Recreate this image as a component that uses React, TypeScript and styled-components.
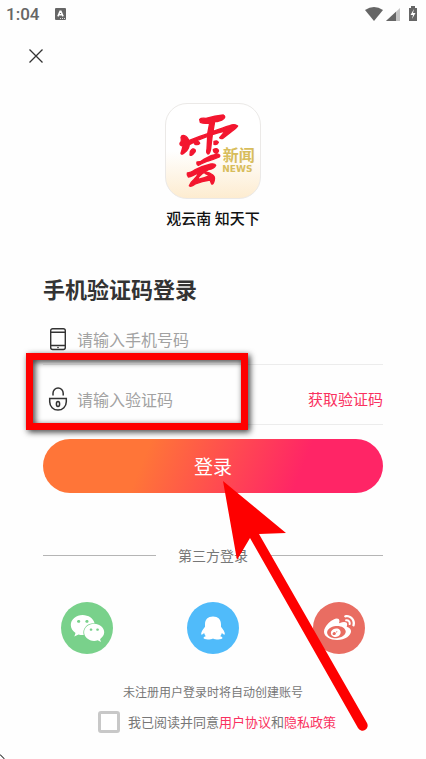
import React, { useState } from 'react';
import styled, { createGlobalStyle } from 'styled-components';
import { FaWeixin, FaWeibo } from 'react-icons/fa';

const GlobalStyle = createGlobalStyle`
  * { box-sizing: border-box; }
  body {
    margin: 0;
    background: #fefefe;
    color: #333;
    font-family: "Noto Sans CJK SC", "Noto Sans", sans-serif;
  }
  button, input { font-family: inherit; }
`;

const Page = styled.div`
  position: relative;
  display: flex;
  flex-direction: column;
  min-height: 100vh;
  overflow: hidden;
`;

const StatusBar = styled.header`
  display: flex;
  align-items: center;
  justify-content: space-between;
  height: 28px;
  padding: 0 7px 0 6px;
  color: #666;
`;

const StatusGroup = styled.div<{ $gap: number }>`
  display: flex;
  align-items: center;
  gap: ${(p) => p.$gap}px;
  svg { display: block; }
`;

const Time = styled.time`
  font: 500 17px/28px Roboto, sans-serif;
`;

const CloseButton = styled.button`
  display: flex;
  align-self: flex-start;
  margin: 20px 0 0 28px;
  padding: 0;
  border: 0;
  background: none;
  color: #333;
  cursor: pointer;
`;

const Brand = styled.section`
  display: flex;
  flex-direction: column;
  align-items: center;
  margin-top: 39px;
`;

const LogoTile = styled.div`
  width: 96px;
  height: 96px;
  border: 1px solid #ebe9e7;
  border-radius: 22px;
  background: linear-gradient(#fff 50%, #fdecd0);
  svg { display: block; width: 94px; height: 94px; }
`;

const Slogan = styled.p`
  margin: 7px 0 0;
  color: #111;
  font-size: 15px;
  font-weight: 500;
  line-height: 24px;
`;

const Form = styled.form`
  margin: 0 43px;
`;

const Title = styled.h1`
  margin: 42px 0 1px;
  font-size: 22px;
  font-weight: 700;
  line-height: 32px;
`;

const Field = styled.div`
  position: relative;
  display: flex;
  align-items: center;
  height: 60px;
  padding: 9px 0 0 5px;
  border-bottom: 1px solid #ececec;
  color: #333;
  svg { flex: none; }
`;

const FieldLabel = styled.label`
  display: flex;
  flex: none;
  width: 29px;
`;

const TextInput = styled.input`
  flex: 1;
  min-width: 0;
  padding: 0;
  border: 0;
  outline: 0;
  background: none;
  color: #333;
  font-size: 16px;
  line-height: 24px;
  &::placeholder { color: #a2a2a2; opacity: 1; }
`;

const CodeButton = styled.button`
  flex: none;
  padding: 0;
  border: 0;
  background: none;
  color: #fa3160;
  font-size: 15px;
  line-height: 24px;
  cursor: pointer;
`;

const HighlightFrame = styled.div`
  position: absolute;
  z-index: 2;
  top: -12px;
  left: -17px;
  width: 222px;
  height: 77px;
  border: 7px solid #fe0000;
  filter: drop-shadow(2px 2px 3px rgba(0, 0, 0, 0.8));
  pointer-events: none;
`;

const SubmitArea = styled.div`
  position: relative;
  margin-top: 14px;
`;

const SubmitButton = styled.button`
  display: block;
  width: 100%;
  height: 54px;
  padding: 0;
  border: 0;
  border-radius: 27px;
  background: linear-gradient(112deg, #ff7538 30%, #ff2566 75%);
  color: #fff;
  font-size: 19px;
  line-height: 54px;
  cursor: pointer;
`;

const PointerArrow = styled.svg`
  position: absolute;
  z-index: 3;
  top: 42px;
  left: 50%;
  width: 160px;
  height: 252px;
  pointer-events: none;
`;

const Separator = styled.div`
  display: flex;
  align-items: center;
  gap: 22px;
  margin: 50px 43px 0;
  color: #777;
  font-size: 14px;
  line-height: 24px;
  &::before, &::after {
    content: "";
    flex: 1;
    height: 1px;
    background: #b5b5b5;
  }
`;

const Providers = styled.div`
  display: flex;
  justify-content: space-between;
  margin: 35px 61px 0;
`;

const ProviderButton = styled.button<{ $color: string }>`
  display: flex;
  align-items: center;
  justify-content: center;
  width: 52px;
  height: 52px;
  padding: 0;
  border: 0;
  border-radius: 50%;
  background: ${(p) => p.$color};
  color: #fff;
  cursor: pointer;
`;

const Notice = styled.p`
  margin: 28px 0 0;
  color: #777;
  font-size: 12px;
  line-height: 20px;
  text-align: center;
`;

const Agreement = styled.div`
  display: flex;
  align-items: center;
  justify-content: center;
  gap: 8px;
  margin-top: 9px;
  padding: 0 8px 0 16px;
  color: #777;
  font-size: 13px;
  line-height: 22px;
`;

const CheckBox = styled.input`
  appearance: none;
  flex: none;
  width: 22px;
  height: 22px;
  margin: 0;
  border: 3px solid #c8c8c8;
  border-radius: 3px;
  background: #fff;
  &:checked { background: #fa3160; }
`;

const PolicyLink = styled.a`
  color: #fa3160;
  text-decoration: none;
`;

const CornerMark = styled.svg`
  position: absolute;
  bottom: 0;
  left: 0;
`;

const CloudLogo = () => (
  <svg viewBox="48 42 282 282" role="img" aria-label="云新闻">
    <g fill="#f3162f" stroke="#f3162f" strokeWidth="4" strokeLinejoin="round">
      <path d="M149 88Q153 83 168 85Q195 77 220 75Q228 80 221 86Q210 95 194 95L189 124Q220 113 239 107Q254 100 263 108Q259 115 244 125L219 145Q211 147 209 143L226 123Q207 126 187 134L182 176Q180 191 174 192Q168 190 171 177L173 139Q143 149 118 164Q116 179 105 187Q96 196 93 190Q97 178 99 168Q88 166 90 159Q96 155 93 142Q95 135 103 137Q113 140 116 152Q145 140 173 131L179 99Q161 102 151 97Z" />
      <path d="M134 153Q146 152 149 160Q145 166 135 163Q129 157 134 153Z" />
      <path d="M121 184Q128 172 135 179Q138 184 132 189Q124 199 120 195Z" />
      <path d="M192 154Q202 150 205 157Q201 165 192 163Z" />
      <path d="M190 179Q200 172 205 180Q207 186 199 190Q190 188 190 179Z" />
      <path d="M141 216Q152 217 163 207Q183 195 204 192Q212 195 208 201Q190 209 174 213Q157 220 145 226Q139 223 141 216Z" />
      <path d="M112 249Q121 249 136 239Q158 228 183 222Q195 220 197 226Q192 236 175 239L158 250Q147 259 141 269Q162 265 179 257L165 250Q173 244 184 252Q196 257 193 270Q190 285 185 282L180 270Q156 273 136 282Q123 292 118 287Q122 276 131 269Q143 258 147 247Q126 259 115 261Q110 257 112 249Z" />
    </g>
    <g fill="#d8bd5c" fontWeight="700">
      <text x="218" y="214" fontSize="48" fontFamily="'Noto Sans CJK SC', sans-serif">新闻</text>
      <text x="217" y="246" fontSize="27" fontFamily="'DejaVu Sans', sans-serif">NEWS</text>
    </g>
  </svg>
);

const PhoneIcon = () => (
  <svg width="20" height="24" viewBox="0 0 20 24" fill="none" stroke="currentColor" strokeWidth="1.4" aria-hidden="true">
    <rect x="2.7" y="1.7" width="14.6" height="20.8" rx="2" />
    <path d="M3 5.2h14M3 18.5h14" />
    <circle cx="10" cy="20.5" r=".8" fill="currentColor" stroke="none" />
  </svg>
);

const LockIcon = () => (
  <svg width="20" height="26" viewBox="0 0 20 26" fill="none" stroke="currentColor" strokeWidth="1.5" aria-hidden="true">
    <path d="M5 9.5V7.2a5 5 0 0 1 10.2 0v2.3M1.7 12.6h16.6v3.2a8.3 8.3 0 0 1-16.6 0z" />
    <ellipse cx="10" cy="18" rx="1.6" ry="2.5" />
  </svg>
);

const QqIcon = () => (
  <svg width="26" height="26" viewBox="0 0 26 26" fill="currentColor" aria-hidden="true">
    <path d="M13 1.6C7.9 1.6 5 4.7 5 9.2v2.5C2.9 14.3 1.2 17 1.2 18.8c0 1.3.8 1.3 2.9-.7.4 1.3.9 2.3 1.7 3.1-1.4.4-2.3 1-2.3 1.8 0 1.8 7.2 1.8 9.5.4 2.3 1.4 9.5 1.4 9.5-.4 0-.8-.9-1.4-2.3-1.8.8-.8 1.3-1.8 1.7-3.1 2.1 2 2.9 2 2.9.7 0-1.8-1.7-4.5-3.8-7.1V9.2c0-4.5-2.9-7.6-8-7.6z" />
  </svg>
);

export default function App() {
  const [agreed, setAgreed] = useState(false);

  return (
    <Page>
      <GlobalStyle />
      <StatusBar>
        <StatusGroup $gap={15}>
          <Time>1:04</Time>
          <svg width="13" height="13" viewBox="0 0 13 13" aria-hidden="true">
            <rect x="1" y="0" width="11" height="12" rx="1" fill="#666" />
            <path d="M3.9 8.4 6.1 3.2h.8L9.1 8.4M5 6.8h3" fill="none" stroke="#fff" strokeWidth="1.5" />
            <path d="M6 10.5h5" stroke="#ddd" strokeDasharray="1 1" />
          </svg>
        </StatusGroup>
        <svg width="56" height="18" viewBox="0 0 56 18" aria-hidden="true">
          <path d="M2 5Q11-1 20 5L11 16Z" fill="#666" />
          <path d="M37 3v13H23z" fill="#c5c5c5" />
          <path d="M33 6.7V16H23z" fill="#666" />
          <path d="M46 3h2V1h4v2h2v13h-8z" fill="#666" />
          <path d="m51 4-3.5 6H50l-1 4 3.5-6H50z" fill="#fff" />
        </svg>
      </StatusBar>
      <CloseButton type="button" aria-label="关闭">
        <svg width="16" height="16" viewBox="0 0 16 16" stroke="currentColor" strokeWidth="1.3">
          <path d="m1.5 1.5 13 13m0-13-13 13" />
        </svg>
      </CloseButton>

      <Brand>
        <LogoTile><CloudLogo /></LogoTile>
        <Slogan>观云南 知天下</Slogan>
      </Brand>

      <Form onSubmit={(e) => e.preventDefault()}>
        <Title>手机验证码登录</Title>
        <Field>
          <FieldLabel htmlFor="phone" aria-label="手机号码"><PhoneIcon /></FieldLabel>
          <TextInput id="phone" type="tel" placeholder="请输入手机号码" />
        </Field>
        <Field>
          <FieldLabel htmlFor="code" aria-label="验证码"><LockIcon /></FieldLabel>
          <TextInput id="code" type="text" placeholder="请输入验证码" />
          <CodeButton type="button">获取验证码</CodeButton>
          <HighlightFrame />
        </Field>
        <SubmitArea>
          <SubmitButton type="submit">登录</SubmitButton>
          <PointerArrow viewBox="0 0 160 252" aria-hidden="true">
            <path d="m10 0 63 52-27 1 108 189a5 5 0 0 1-9 5L37 57 24 79z" fill="#fe0000" />
          </PointerArrow>
        </SubmitArea>
      </Form>

      <Separator>第三方登录</Separator>
      <Providers>
        <ProviderButton type="button" $color="#79d18b" aria-label="微信登录"><FaWeixin size={35} /></ProviderButton>
        <ProviderButton type="button" $color="#50bbfa" aria-label="QQ登录"><QqIcon /></ProviderButton>
        <ProviderButton type="button" $color="#e96d62" aria-label="微博登录"><FaWeibo size={31} /></ProviderButton>
      </Providers>
      <Notice>未注册用户登录时将自动创建账号</Notice>
      <Agreement>
        <CheckBox id="agree" type="checkbox" checked={agreed} onChange={(e) => setAgreed(e.target.checked)} />
        <label htmlFor="agree">
          我已阅读并同意<PolicyLink href="#terms">用户协议</PolicyLink>和<PolicyLink href="#privacy">隐私政策</PolicyLink>
        </label>
      </Agreement>
      <CornerMark width="5" height="5" viewBox="0 0 5 5" aria-hidden="true">
        <path d="M0 1h1v1h1v1h1v1h1v1" fill="none" stroke="#444" />
      </CornerMark>
    </Page>
  );
}
